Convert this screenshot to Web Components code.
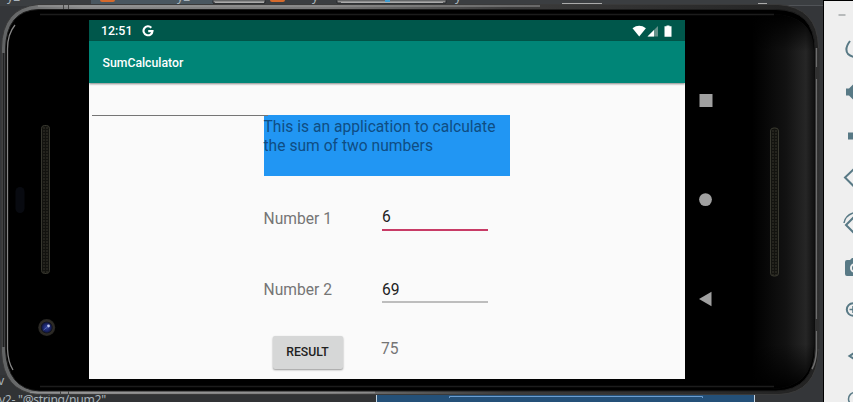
<!DOCTYPE html>
<html lang="en"><head><meta charset="utf-8"><title>SumCalculator</title>
<style>html,body{margin:0;height:100%;overflow:hidden;background:#343639}body{font-family:Roboto,sans-serif}</style></head>
<body>
<emulator-desktop>
  <code-backdrop slot="back"></code-backdrop>
  <phone-device slot="phone">
    <android-screen>
      <status-bar slot="status" time="12:51"></status-bar>
      <app-bar slot="bar">SumCalculator</app-bar>
      <sum-form></sum-form>
    </android-screen>
    <nav-keys slot="nav"></nav-keys>
  </phone-device>
  <emulator-tools slot="tools"></emulator-tools>
</emulator-desktop>
<script>
const define = (name, html) => customElements.define(name, class extends HTMLElement {
  constructor() {
    super();
    this.attachShadow({mode: 'open'}).innerHTML = html;
    this.shadowRoot.querySelectorAll('[data-attr]').forEach(e => e.textContent = this.getAttribute(e.dataset.attr));
  }
});

define('emulator-desktop', `<style>
:host{display:grid;grid-template-columns:823px 30px;width:853px;height:402px;position:relative;overflow:hidden}
.back{position:absolute;inset:0}
.phone,.tools{position:relative}
</style><div class="back"><slot name="back"></slot></div><div class="phone"><slot name="phone"></slot></div><div class="tools"><slot name="tools"></slot></div>`);

define('code-backdrop', `<style>
:host{display:block;width:853px;height:402px;position:relative;overflow:hidden;font:12.2px "Noto Sans",sans-serif;color:#a9b3bb;background:#343639}
svg{position:absolute;inset:0}
span{position:absolute;white-space:nowrap;line-height:16px}
</style><svg width="853" height="402">
<rect width="823" height="6" fill="#3b3e41"/><rect x="91" width="122" height="6" fill="#4a5760"/>
<rect y="375" width="376" height="27" fill="#313335"/>
<rect x="100" y="-3" width="15" height="5" rx="2" fill="#d56a2c"/><rect x="270" y="-3" width="15" height="5" rx="2" fill="#d56a2c"/>
<path d="M213 .5V3H265V.5M337 .5V3H446V.5" fill="#8d8d8d" stroke="#25272a"/><path d="M215 2.5H264M341 2.5H443M562 3.5h40M758 3.5h9" stroke="#aaa"/>
<rect x="385" width="5" height="2" fill="#3e9bd0"/><path d="M740 5.5H823" stroke="#505357"/>
<rect x="376" y="390" width="379" height="12" fill="#245078"/><path d="M376.5 390V402M754.5 390V402" stroke="#c3d2df"/><path d="M449.500 398V396.500H702.500V398" fill="none" stroke="#6d9ed0"/>
</svg>
<span style="left:7px;top:-11px">y2</span><span style="left:177px;top:-11px">y2</span><span style="left:312px;top:-11px">y</span><span style="left:455px;top:-11px">y</span>
<span style="left:-2px;top:373px">v</span><span style="left:-1px;top:392px;letter-spacing:-.32px">v2- "@string/num2"</span>`);

define('phone-device', `<style>
:host{display:grid;box-sizing:border-box;grid-template-columns:596px 40px;padding:20px 0 0 89px;height:402px;position:relative}
svg{position:absolute;inset:0}
::slotted(*){position:relative}
</style><svg width="823" height="402">
<defs>
<linearGradient id="rim" x2="1"><stop stop-color="#606263"/><stop offset=".1" stop-color="#8a8a8a"/><stop offset=".4" stop-color="#777"/><stop offset=".62" stop-color="#3c3c3c"/><stop offset="1" stop-color="#222"/></linearGradient>
<linearGradient id="edge" x2="1"><stop stop-color="#000"/><stop offset=".55" stop-color="#121212"/><stop offset=".87" stop-color="#262626"/><stop offset="1" stop-color="#111"/></linearGradient>
<linearGradient id="fadeY" x2="0" y2="1"><stop stop-color="#000"/><stop offset=".1" stop-color="#000" stop-opacity="0"/><stop offset=".88" stop-color="#000" stop-opacity="0"/><stop offset="1" stop-color="#000"/></linearGradient>
<pattern id="mesh" width="3" height="3" patternUnits="userSpaceOnUse"><rect width="3" height="3" fill="#24231d"/><path d="M0 .5H3M.5 0V3" stroke="#13130f"/></pattern>
<radialGradient id="lens"><stop stop-color="#3144a3"/><stop offset=".5" stop-color="#151d56"/><stop offset=".65" stop-color="#12141c"/><stop offset=".75" stop-color="#302d27"/><stop offset="1" stop-color="#252421"/></radialGradient>
</defs>
<path d="M38 4.500H778Q817.500 7 818.500 47V350Q817 393 779 394.500H37Q3 391 1.500 352V48Q2 8 38 4.500Z" fill="url(#rim)" stroke="#3a3a3a"/>
<path d="M39 9.500H776Q814 10 815 49V348Q814 390 776 391H39Q7 389 5.500 349V50Q6 10 39 9.500Z" fill="#000" stroke="#1c1c1c"/>
<path d="M752 14H773Q814 16 814 51V346Q813 388 771 389H752Z" fill="url(#edge)"/><path d="M752 14H773Q814 16 814 51V346Q813 388 771 389H752Z" fill="url(#fadeY)"/>
<path d="M40 14.500H774M40 386.500H774" stroke="#1c1c1c" stroke-width="1.500"/>
<path d="M15 25Q7.500 34 7.500 49V349Q8 362 13 370" fill="none" stroke="#858585" stroke-width="1.300"/>
<path d="M3.500 53V347" stroke="#202122" stroke-width="2"/>
<path d="M816.500 48V350Q816 362 812 369" fill="none" stroke="#6d6d6d" stroke-width="1.600"/><path d="M818.500 48V349" stroke="#303030" stroke-width="2"/>
<path d="M38 6H540M30 392.500H375" stroke="#9b9b9b" stroke-opacity=".65" stroke-width="1.500"/>
<path d="M63.500 5V9M68.500 5V9M60.500 391V395M68.500 391V395" stroke="#444"/><path d="M815 67h4v12h-4zM815 319h4v12h-4z" fill="#303030"/>
<rect x="41.500" y="125.500" width="8" height="148" rx="3" fill="url(#mesh)" stroke="#38382f"/>
<rect x="770.500" y="128" width="8" height="148" rx="3" fill="url(#mesh)" stroke="#38382f"/>
<rect x="15.500" y="187" width="9" height="26" rx="4.500" fill="#080a10"/>
<circle cx="46.700" cy="327.500" r="8.500" fill="url(#lens)"/><circle cx="48.500" cy="326" r="1.400" fill="#c0c8f0"/><path d="M43.500 330l4-3" stroke="#5365ad"/>
</svg><slot></slot><slot name="nav"></slot>`);

define('android-screen', `<style>:host{display:grid;grid-template-rows:21px 42px 296px;width:596px;height:359px;background:#fafafa;overflow:hidden}</style><slot name="status"></slot><slot name="bar"></slot><slot></slot>`);

define('status-bar', `<style>
:host{display:flex;align-items:center;box-sizing:border-box;background:#00574b;color:#fff;padding:1px 12px 0;font:500 12.4px/20px Roboto,sans-serif}
.g{margin-left:10px}.sys{margin-left:auto}
svg{display:block}
</style><span data-attr="time"></span>
<svg class="g" width="12" height="12" viewBox="0 0 12 12"><path d="M9.300 2.700A4.500 4.500 0 1 0 10.500 6.100H6.200" fill="none" stroke="#fff" stroke-width="2.100"/></svg>
<svg class="sys" width="41" height="13" viewBox="-1 0 41 13"><path d="M-.5 3.200Q6.200-1.500 12.900 3.200L6.200 11.500Z" fill="#fff"/><path d="M25 1V11.500H14.500Z" fill="#66928b"/><path d="M21 5V11.500H14.500Z" fill="#fff"/><path d="M33.500 1.200V.4h3v.8h2V11.800H31.500V1.200Z" fill="#fff"/></svg>`);

define('app-bar', `<style>:host{display:flex;align-items:center;padding:1px 0 0 13.500px;background:#008577;color:#fff;font:500 12.250px/20px Roboto,sans-serif;box-shadow:0 1px 2px #0007;z-index:1}</style><slot></slot>`);

define('sum-form', `<style>
:host{display:grid;grid-template-columns:174.500px 118px 106.500px;grid-template-rows:32.400px 60.600px 55px 72px 76px;font:15.600px/18.300px Roboto,sans-serif;letter-spacing:.02px;color:#757575}
.blank{grid-area:1/1;position:relative;box-sizing:border-box;width:176px;height:33px;margin-left:3px;border-bottom:1px solid #757575;z-index:1}
.note{grid-area:2/2/3/4;width:246.500px;box-sizing:border-box;padding:3px 0;background:#2196f3;color:#0f4d83;white-space:nowrap}
.label{grid-column:2;align-self:end;padding-bottom:3px}
.field{grid-column:3;align-self:end;color:#212121;padding:0 0 3px .5px;border-bottom:2px solid #c83b66}
.field.idle{padding-bottom:2px;border-color:#bdbdbd}
.r3{grid-row:3}.r4{grid-row:4}
.label.r4{padding-bottom:4px}
.button{grid-area:5/2;margin:33px 0 0 9px;width:70px;height:33px;display:grid;place-items:center;background:#d6d7d7;color:#212121;border-radius:2px;font-size:12.200px;font-weight:500;box-shadow:0 1px 2px #0006}
.total{grid-area:5/3;padding-top:37.500px;margin-left:-.5px}
</style>
<div class="blank"></div>
<div class="note">This is an application to calculate<br>the sum of two numbers</div>
<div class="label r3">Number 1</div><div class="field r3">6</div>
<div class="label r4">Number 2</div><div class="field idle r4">69</div>
<div class="button">RESULT</div><div class="total">75</div>`);

define('nav-keys', `<style>:host{display:flex;flex-direction:column;align-items:flex-start;padding:74px 0 0 13.500px}svg{display:block}.h{margin-top:85px}.b{margin-top:84px}</style>
<svg width="14" height="14"><rect x=".5" width="13" height="13" fill="#a0a0a0"/></svg>
<svg class="h" width="14" height="14"><circle cx="6.500" cy="6.600" r="6.400" fill="#a0a0a0"/></svg>
<svg class="b" width="14" height="16"><path d="M0 8L12.500 .8V15.200Z" fill="#a0a0a0"/></svg>`);

define('emulator-tools', `<style>:host{display:block;height:402px;box-sizing:border-box;border-left:1px solid #000;border-top:1px solid #000;background:#efefef}svg{display:block;overflow:hidden}</style>
<svg width="29" height="401" viewBox="824 1 29 401" fill="none" stroke="#587985" stroke-width="2">
<path d="M838.500 15h7" stroke="#a5a9aa" stroke-width="1.500"/>
<path d="M850 41Q844 49 848 54Q850 56 854 57"/>
<path d="M846 88.500h3l4-4v15l-4-4h-3zM848 132.500h6v7h-6z" fill="#587985" stroke="none"/>
<path d="M854 169l-9 8.500 9 9M855 216l-9 9 9 9"/><path d="M844 223q1-7 9-10" stroke-width="1.500"/>
<path d="M845 262q0-2 2-2h3l2-2h3v18h-8q-2 0-2-2z" fill="#587985" stroke="none"/><circle cx="855" cy="268" r="4" stroke="#efefef"/>
<circle cx="853" cy="309.500" r="6.200"/><path d="M849.500 309.500h4M853 306v7" stroke-width="1.500"/>
<path d="M855 352.500l-5.500 3.500 5.500 3.500"/><circle cx="855" cy="399" r="6.500" stroke-width="1.500"/>
</svg>`);
</script></body></html>
